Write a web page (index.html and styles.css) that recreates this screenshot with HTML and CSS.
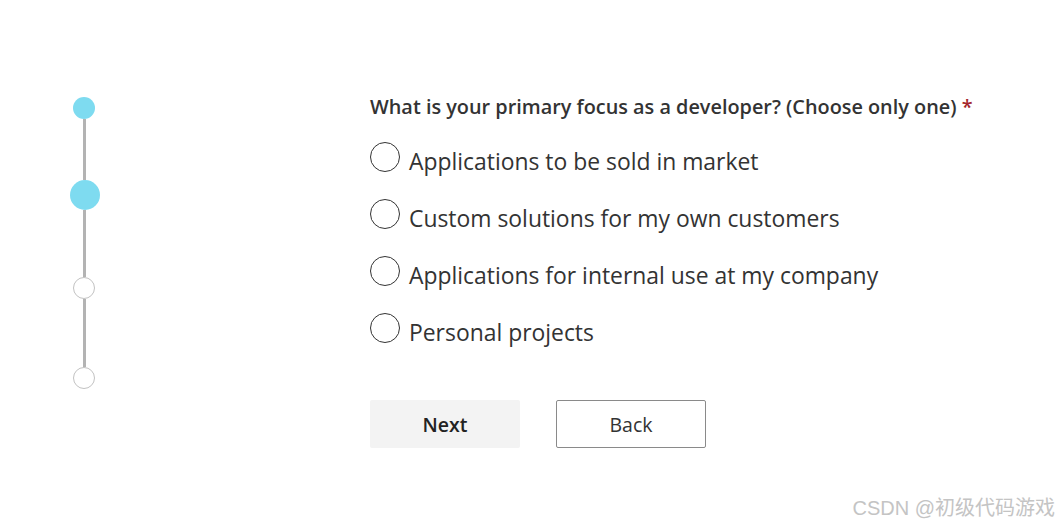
FILE: index.html
```html
<!DOCTYPE html>
<html>
<head>
<meta charset="utf-8">
<link rel="stylesheet" href="styles.css">
</head>
<body>
<div class="page">
  <div class="stepper">
    <div class="dot done"></div>
    <div class="line l1"></div>
    <div class="dot current"></div>
    <div class="line l2"></div>
    <div class="dot todo"></div>
    <div class="line l3"></div>
    <div class="dot todo"></div>
  </div>
  <form class="form">
    <div class="question">What is your primary focus as a developer? (Choose only one) <span class="req">*</span></div>
    <div class="options">
      <label class="option"><span class="radio"></span><span class="label">Applications to be sold in market</span></label>
      <label class="option"><span class="radio"></span><span class="label">Custom solutions for my own customers</span></label>
      <label class="option"><span class="radio"></span><span class="label">Applications for internal use at my company</span></label>
      <label class="option"><span class="radio"></span><span class="label">Personal projects</span></label>
    </div>
    <div class="buttons">
      <button type="button" class="btn next">Next</button>
      <button type="button" class="btn back">Back</button>
    </div>
  </form>
</div>
<div class="watermark">CSDN @初级代码游戏</div>
</body>
</html>
```
FILE: styles.css
```css
html, body {
  margin: 0;
  padding: 0;
  background: #ffffff;
  width: 1059px;
  height: 527px;
  overflow: hidden;
  font-family: "Open Sans", "Noto Sans", sans-serif;
  color: #333333;
}
.page {
  display: flex;
  padding-top: 97px;
}
.stepper {
  width: 168px;
  display: flex;
  flex-direction: column;
  align-items: center;
}
.dot {
  border-radius: 50%;
  box-sizing: border-box;
  flex: none;
}
.dot.done {
  width: 22px;
  height: 22px;
  background: #7edbf0;
}
.dot.current {
  width: 30px;
  height: 30px;
  margin-left: 1px;
  background: #7edbf0;
}
.dot.todo {
  width: 22px;
  height: 22px;
  border: 1px solid #c2c2c2;
  background: #fff;
}
.line {
  width: 3px;
  background: #b3b3b3;
  flex: none;
}
.l1 { height: 61px; }
.l2 { height: 67px; }
.l3 { height: 68px; }
.form {
  margin-left: 202px;
  display: flex;
  flex-direction: column;
}
.question {
  font-size: 19.85px;
  font-weight: 600;
  line-height: 22px;
  margin-top: -1px;
  color: #333;
}
.req {
  color: #a4262c;
}
.options {
  display: flex;
  flex-direction: column;
  gap: 29px;
  margin-top: 25px;
}
.option {
  display: flex;
  align-items: center;
  height: 28px;
}
.radio {
  width: 30px;
  height: 30px;
  box-sizing: border-box;
  border: 1px solid #333;
  border-radius: 50%;
  flex: none;
  margin-right: 9px;
}
.label {
  font-size: 22.9px;
  line-height: 28px;
  color: #333;
  margin-top: 10px;
}
.buttons {
  display: flex;
  gap: 36px;
  margin-top: 58px;
}
.btn {
  width: 150px;
  height: 48px;
  border-radius: 2px;
  font-family: "Open Sans", "Noto Sans", sans-serif;
  font-size: 19.5px;
  color: #222;
  cursor: pointer;
  padding: 0;
}
.btn.next {
  background: #f3f3f3;
  border: none;
  font-weight: 600;
}
.btn.back {
  background: #fff;
  border: 1px solid #8a8a8a;
  color: #333;
}
.watermark {
  position: absolute;
  right: 4px;
  bottom: 6px;
  font-family: "Liberation Sans", "Noto Sans CJK SC", sans-serif;
  font-size: 20px;
  color: #c4c4c4;
}
```
